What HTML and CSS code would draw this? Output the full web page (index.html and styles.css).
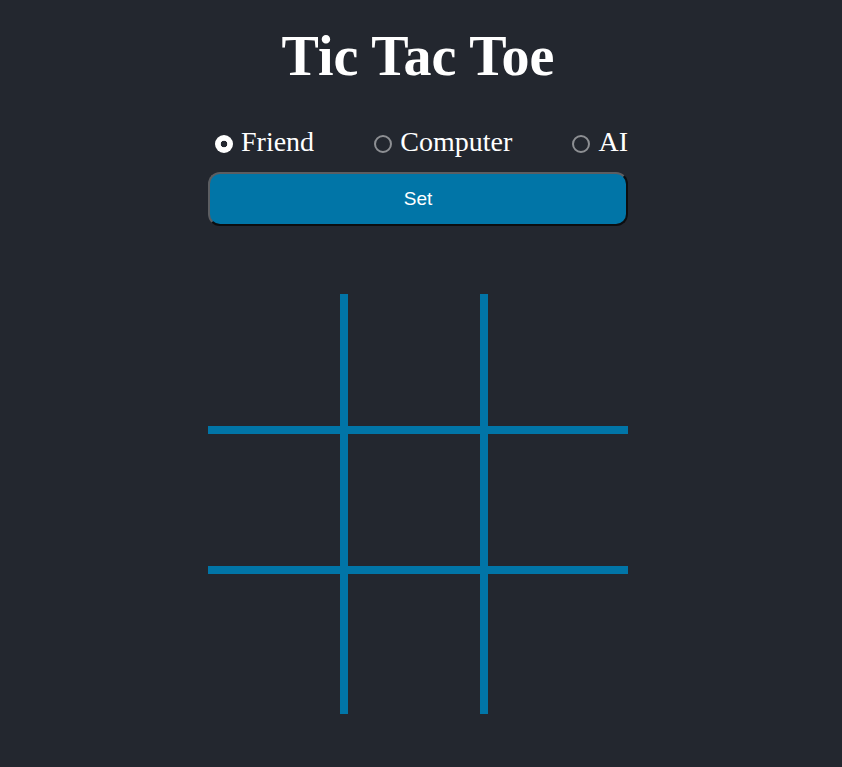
FILE: index.html
```html
<!DOCTYPE html>
<html lang="en">
<head>
<meta charset="utf-8">
<title>Tic Tac Toe</title>
<link rel="stylesheet" href="styles.css">
</head>
<body>
<main class="game">
  <h1 class="title">Tic Tac Toe</h1>
  <form class="mode">
    <label class="option"><input type="radio" name="mode" checked><span>Friend</span></label>
    <label class="option"><input type="radio" name="mode"><span>Computer</span></label>
    <label class="option"><input type="radio" name="mode"><span>AI</span></label>
  </form>
  <button class="set" type="button">Set</button>
  <div class="board">
    <button class="square r0 c0"></button>
    <button class="square r0 c1"></button>
    <button class="square r0 c2"></button>
    <button class="square r1 c0"></button>
    <button class="square r1 c1"></button>
    <button class="square r1 c2"></button>
    <button class="square r2 c0"></button>
    <button class="square r2 c1"></button>
    <button class="square r2 c2"></button>
  </div>
</main>
</body>
</html>
```

FILE: styles.css
```css
html, body {
  margin: 0;
  background: #23272f;
}
body {
  padding-right: 6px;
  min-height: 767px;
  box-sizing: border-box;
  font-family: "Liberation Serif", "Times New Roman", serif;
  color: #ffffff;
}
.game {
  width: 420px;
  margin: 0 auto;
  display: flex;
  flex-direction: column;
}
.title {
  margin: 27px -20px 40px;
  font-size: 56px;
  font-weight: bold;
  text-align: center;
  line-height: 59px;
}
.mode {
  display: flex;
  justify-content: space-between;
  align-items: center;
  height: 31px;
  margin: 0 0 15px;
  font-size: 28px;
  line-height: 31px;
}
.option {
  display: flex;
  align-items: center;
}
.option input {
  appearance: none;
  -webkit-appearance: none;
  width: 18px;
  height: 18px;
  margin: 4px 8px 0 7px;
  border: 2px solid #8d8f93;
  border-radius: 50%;
  box-sizing: border-box;
  background: transparent;
}
.option input:checked {
  border: none;
  background: radial-gradient(circle, #23272f 0 3px, #ffffff 3.6px);
}
.set {
  height: 54px;
  margin: 0 0 68px;
  padding: 0;
  border: 2px solid;
  border-color: #5c5e62 #0c0d0f #0c0d0f #5c5e62;
  border-radius: 12px;
  background: #0175a7;
  color: #ffffff;
  font-family: "Liberation Sans", Arial, sans-serif;
  font-size: 19px;
}
.board {
  display: grid;
  grid-template-columns: repeat(3, 140px);
  grid-template-rows: repeat(3, 140px);
}
.square {
  box-sizing: border-box;
  margin: 0;
  padding: 0;
  border: 0 solid #0175a7;
  background: transparent;
}
.c0, .c1 {
  border-right-width: 8px;
}
.r0, .r1 {
  border-bottom-width: 8px;
}
```
